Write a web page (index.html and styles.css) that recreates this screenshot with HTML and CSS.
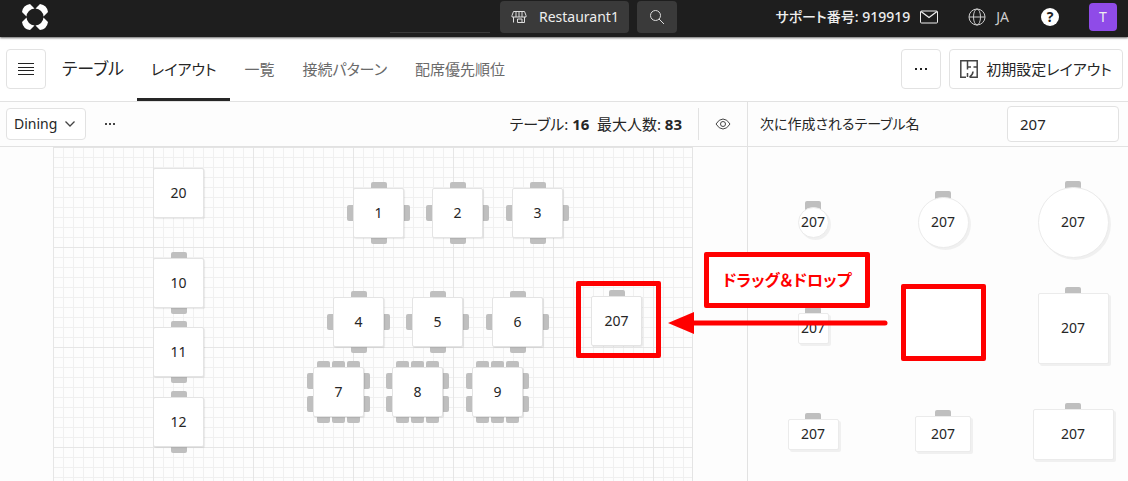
FILE: index.html
```html
<!DOCTYPE html>
<html lang="ja">
<head>
  <meta charset="UTF-8">
  <meta name="viewport" content="width=device-width, initial-scale=1.0">
  <title>テーブル</title>
  <link rel="stylesheet" href="styles.css">
</head>
<body>
  <!-- トップバー -->
  <header class="topbar">
    <svg class="logo" viewBox="0 0 26 26" width="26" height="26">
      <g fill="#fff">
        <path d="M8 0L12.500 4.500A8.500 8.500 0 0 0 4.500 12.500L0 8Q1 1 8 0Z"/>
        <path d="M8 0L12.500 4.500A8.500 8.500 0 0 0 4.500 12.500L0 8Q1 1 8 0Z" transform="rotate(90 13 13)"/>
        <path d="M8 0L12.500 4.500A8.500 8.500 0 0 0 4.500 12.500L0 8Q1 1 8 0Z" transform="rotate(180 13 13)"/>
        <path d="M8 0L12.500 4.500A8.500 8.500 0 0 0 4.500 12.500L0 8Q1 1 8 0Z" transform="rotate(270 13 13)"/>
      </g>
    </svg>
    <div class="scope">
      <div class="scope-line"></div>
      <button class="scope-button">
        <svg viewBox="0 0 16 16" width="16" height="16" fill="none" stroke="#ddd">
          <path d="M2.500 2.500h11l1.500 4v1.500h-14V6.500zM5 3v5M8 3v5M11 3v5M2.500 8v5.500M13.500 8v5.500h-7v-3.500h4.500v3.500"/>
        </svg>
        <span>Restaurant1</span>
      </button>
      <button class="scope-search" aria-label="検索">
        <svg viewBox="0 0 16 16" width="16" height="16" fill="none" stroke="#ddd">
          <circle cx="6.500" cy="6.500" r="5"/><path d="M10 10l5 5"/>
        </svg>
      </button>
    </div>
    <div class="topbar-right">
      <span class="support">サポート番号: 919919</span>
      <svg class="mail" viewBox="0 0 18 14" width="18" height="14" fill="none" stroke="#eee">
        <rect x="0.500" y="1" width="17" height="12" rx="1"/><path d="M1 1.500l8 6 8-6" stroke-width="1.300"/>
      </svg>
      <button class="lang">
        <svg viewBox="0 0 18 18" width="18" height="18" fill="none" stroke="#ccc">
          <circle cx="9" cy="9" r="8"/><ellipse cx="9" cy="9" rx="3.500" ry="8"/><path d="M1 9h16"/>
        </svg>
        <span>JA</span>
      </button>
      <button class="help">?</button>
      <button class="avatar">T</button>
    </div>
  </header>

  <!-- ページ見出しとタブ -->
  <div class="page-header">
    <button class="icon-button" aria-label="メニュー">
      <svg viewBox="0 0 16 12" width="16" height="12" fill="none" stroke="#222"><path d="M0 .5h16M0 4.500h16M0 7.500h16M0 11.500h16"/></svg>
    </button>
    <h1>テーブル</h1>
    <nav class="tabs">
      <a class="tab active" href="#">レイアウト</a>
      <a class="tab" href="#">一覧</a>
      <a class="tab" href="#">接続パターン</a>
      <a class="tab" href="#">配席優先順位</a>
    </nav>
    <div class="actions">
      <button class="icon-button" aria-label="その他"><svg viewBox="0 0 14 4" width="14" height="4" fill="#222"><path d="M1 1h2v2H1zM6 1h2v2H6zM11 1h2v2h-2z"/></svg></button>
      <button class="default-layout">
        <svg viewBox="0 0 18 18" width="18" height="18" fill="none" stroke="#444" stroke-width="1.500">
          <path d="M9.500 17.200H17.200V.8H.8V17.200H6M7.500 1v8.500M7.500 13v4M7.500 7h3.500M13.500 7H17M13 11.500q0 3-3.500 5.500"/>
        </svg>
        <span>初期設定レイアウト</span>
      </button>
    </div>
  </div>

  <main class="workspace">
    <section class="editor">
      <div class="toolbar">
        <div class="area-select">
          <select aria-label="エリア"><option>Dining</option></select>
          <svg viewBox="0 0 10 6" width="10" height="6" fill="none" stroke="#444" stroke-width="1.300"><path d="M.5 .5l4.500 4.500 4.500-4.500"/></svg>
        </div>
        <button class="more" aria-label="エリアの操作"><svg viewBox="0 0 12 4" width="12" height="4" fill="#444"><path d="M1 1h2v2H1zM5 1h2v2H5zM9 1h2v2H9z"/></svg></button>
        <p class="totals">テーブル: <b>16</b>&ensp;最大人数: <b>83</b></p>
        <button class="preview" aria-label="表示">
          <svg viewBox="0 0 16 12" width="16" height="12" fill="none" stroke="#444">
            <path d="M1 6q3-5 7-5t7 5q-3 5-7 5T1 6z"/><circle cx="8" cy="6" r="2.500"/>
          </svg>
        </button>
      </div>

      <!-- フロア図 -->
      <div class="floor">
        <div class="canvas">
          <div class="table t20"><span class="face">20</span></div>
          <div class="table t10">
            <div class="chairs top"><i></i></div><div class="chairs bottom"><i></i></div><span class="face">10</span>
          </div>
          <div class="table t11">
            <div class="chairs top"><i></i></div><div class="chairs bottom"><i></i></div><span class="face">11</span>
          </div>
          <div class="table t12">
            <div class="chairs top"><i></i></div><div class="chairs bottom"><i></i></div><span class="face">12</span>
          </div>
          <div class="table t1">
            <div class="chairs top"><i></i></div><div class="chairs bottom"><i></i></div>
            <div class="chairs left"><i></i></div><div class="chairs right"><i></i></div><span class="face">1</span>
          </div>
          <div class="table t2">
            <div class="chairs top"><i></i></div><div class="chairs bottom"><i></i></div>
            <div class="chairs left"><i></i></div><div class="chairs right"><i></i></div><span class="face">2</span>
          </div>
          <div class="table t3">
            <div class="chairs top"><i></i></div><div class="chairs bottom"><i></i></div>
            <div class="chairs left"><i></i></div><div class="chairs right"><i></i></div><span class="face">3</span>
          </div>
          <div class="table t4">
            <div class="chairs top"><i></i></div><div class="chairs bottom"><i></i></div>
            <div class="chairs left"><i></i></div><div class="chairs right"><i></i></div><span class="face">4</span>
          </div>
          <div class="table t5">
            <div class="chairs top"><i></i></div><div class="chairs bottom"><i></i></div>
            <div class="chairs left"><i></i></div><div class="chairs right"><i></i></div><span class="face">5</span>
          </div>
          <div class="table t6">
            <div class="chairs top"><i></i></div><div class="chairs bottom"><i></i></div>
            <div class="chairs left"><i></i></div><div class="chairs right"><i></i></div><span class="face">6</span>
          </div>
          <div class="table party t7">
            <div class="chairs top"><i></i><i></i><i></i></div><div class="chairs bottom"><i></i><i></i><i></i></div>
            <div class="chairs left"><i></i><i></i></div><div class="chairs right"><i></i><i></i></div><span class="face">7</span>
          </div>
          <div class="table party t8">
            <div class="chairs top"><i></i><i></i><i></i></div><div class="chairs bottom"><i></i><i></i><i></i></div>
            <div class="chairs left"><i></i><i></i></div><div class="chairs right"><i></i><i></i></div><span class="face">8</span>
          </div>
          <div class="table party t9">
            <div class="chairs top"><i></i><i></i><i></i></div><div class="chairs bottom"><i></i><i></i><i></i></div>
            <div class="chairs left"><i></i><i></i></div><div class="chairs right"><i></i><i></i></div><span class="face">9</span>
          </div>
          <div class="table t207">
            <div class="chairs top"><i></i></div><span class="face">207</span>
          </div>
        </div>
      </div>
    </section>

    <!-- テーブルのパレット -->
    <aside class="side">
      <div class="next-name">
        <label for="next-name">次に作成されるテーブル名</label>
        <input type="text" id="next-name" value="207">
      </div>
      <div class="palette">
        <div class="slot"><div class="shape round small"><div class="chairs top"><i></i></div><span class="face">207</span></div></div>
        <div class="slot"><div class="shape round medium"><div class="chairs top"><i></i></div><span class="face">207</span></div></div>
        <div class="slot"><div class="shape round large"><div class="chairs top"><i></i></div><span class="face">207</span></div></div>
        <div class="slot"><div class="shape small"><div class="chairs top"><i></i></div><span class="face">207</span></div></div>
        <div class="slot"></div>
        <div class="slot"><div class="shape large"><div class="chairs top"><i></i></div><span class="face">207</span></div></div>
        <div class="slot"><div class="shape wide-s"><div class="chairs top"><i></i></div><span class="face">207</span></div></div>
        <div class="slot"><div class="shape wide-m"><div class="chairs top"><i></i></div><span class="face">207</span></div></div>
        <div class="slot"><div class="shape wide-l"><div class="chairs top"><i></i></div><span class="face">207</span></div></div>
      </div>
    </aside>

    <!-- 操作の説明 -->
    <div class="mark mark-to"></div>
    <div class="mark mark-from"></div>
    <svg class="arrow" viewBox="0 0 220 22" width="220" height="22">
      <path d="M20 11H217" stroke="#f00" stroke-width="5" stroke-linecap="round"/>
      <path d="M0 11L26 0V22z" fill="#f00"/>
    </svg>
    <div class="mark mark-label">ドラッグ＆ドロップ</div>
  </main>
</body>
</html>
```
FILE: styles.css
```css
* {
  box-sizing: border-box;
}

html, body {
  height: 100%;
  margin: 0;
}

body {
  display: flex;
  flex-direction: column;
  overflow: hidden;
  background: #fff;
  color: #262626;
  font-family: "Noto Sans", "Noto Sans CJK JP", sans-serif;
  font-size: 15px;
  line-height: 20px;
  font-feature-settings: "palt"; /* かなを詰めて組む */
}

button, select, input {
  font: inherit;
  color: inherit;
  font-feature-settings: inherit;
}

button {
  padding: 0;
  border: none;
  background: none;
  cursor: pointer;
}

svg {
  display: block;
  flex: none;
}

/* トップバー */
.topbar {
  display: flex;
  align-items: center;
  flex: none;
  height: 37px;
  padding: 0 11px 3px 22px;
  background: #1e1e1e;
  color: #eee;
  box-shadow: 0 1px 2px rgba(0, 0, 0, 0.6);
  position: relative;
  font-size: 14px;
}

.scope {
  display: flex;
  gap: 8px;
  margin: 0 98px 0 auto;
}

.scope-line {
  width: 100px;
  border-bottom: 1px solid #3a3a3a;
  margin-right: 2px;
}

.scope-button,
.scope-search {
  display: flex;
  align-items: center;
  justify-content: center;
  gap: 12px;
  height: 32px;
  padding: 0 12px;
  border-radius: 4px;
  background: #3a3a3a;
}

.scope-button {
  width: 129px;
}

.scope-search {
  width: 40px;
}

.topbar-right {
  display: flex;
  align-items: center;
}

.support {
  font-weight: 500;
}

.mail {
  margin: 0 30px 0 10px;
}

.lang {
  display: flex;
  align-items: center;
  gap: 10px;
  color: #ccc;
  font-size: 14px;
}

.help {
  width: 18px;
  height: 18px;
  margin: 0 30px 0 32px;
  border-radius: 50%;
  background: #fff;
  color: #1e1e1e;
  font-weight: bold;
  line-height: 18px;
}

.avatar {
  width: 28px;
  height: 28px;
  border-radius: 4px;
  background: #8f4be8;
}

/* ページ見出し */
.page-header {
  display: flex;
  align-items: center;
  flex: none;
  height: 65px;
  padding: 0 5px 0 6px;
  border-bottom: 1px solid #e2e2e2;
}

.icon-button,
.default-layout {
  display: flex;
  align-items: center;
  justify-content: center;
  width: 40px;
  height: 40px;
  border: 1px solid #e2e2e2;
  border-radius: 4px;
  background: #fff;
}

h1 {
  width: 75px;
  margin: 0 0 0 16px;
  font-size: 17px;
  font-weight: normal;
  line-height: 24px;
  white-space: nowrap;
}

.tabs {
  display: flex;
  align-self: stretch;
}

.tab {
  display: flex;
  align-items: center;
  padding: 0 14px;
  border-top: 3px solid transparent;
  border-bottom: 3px solid transparent;
  color: #6a6a6a;
  text-decoration: none;
  white-space: nowrap;
}

.tab.active {
  border-bottom-color: #262626;
  color: #262626;
}

.actions {
  display: flex;
  gap: 8px;
  margin-left: auto;
}

.default-layout {
  width: 174px;
  gap: 8px;
  white-space: nowrap;
}

/* 作業エリア */
.workspace {
  position: relative;
  display: flex;
  flex: 1;
  min-height: 0;
}

.editor {
  display: flex;
  flex-direction: column;
  flex: 1;
  min-width: 0;
  background: #fdfdfd;
}

.toolbar,
.next-name {
  display: flex;
  align-items: center;
  flex: none;
  height: 45px;
  border-bottom: 1px solid #e2e2e2;
}

.toolbar {
  padding: 0 16px 0 6px;
}

.area-select {
  display: grid;
  align-items: center;
  width: 80px;
}

.area-select select,
.area-select svg {
  grid-area: 1 / 1;
}

.area-select select {
  width: 100%;
  height: 32px;
  padding: 0 7px;
  border: 1px solid #e2e2e2;
  border-radius: 4px;
  background: #fff;
  font-size: 14px;
  appearance: none;
}

.area-select svg {
  justify-self: end;
  margin-right: 11px;
  pointer-events: none;
}

.more {
  padding: 8px 18px;
}

.totals {
  margin: 0 16px 0 auto;
}

.preview {
  display: flex;
  align-items: center;
  height: 32px;
  padding-left: 16px;
  border-left: 1px solid #e2e2e2;
}

.floor {
  display: flex;
  flex: 1;
  padding: 0 54px 0 53px;
}

/* 方眼は10px、太線は100pxごと */
.canvas {
  position: relative;
  flex: 1;
  border-right: 1px solid #e4e4e4;
  border-top: 1px solid #e4e4e4;
  background-color: #fdfdfd;
  background-image:
    linear-gradient(90deg, #e6e6e6 1px, transparent 1px),
    linear-gradient(#e6e6e6 1px, transparent 1px),
    linear-gradient(90deg, #f0f0f0 1px, transparent 1px),
    linear-gradient(#f0f0f0 1px, transparent 1px);
  background-size: 100px 100px, 100px 100px, 10px 10px, 10px 10px;
  background-origin: border-box;
}

.table,
.shape {
  display: flex;
  width: 51px;
  height: 51px;
}

.table {
  position: absolute;
  height: 50px;
}

.shape {
  position: relative;
}

.face {
  position: relative;
  display: flex;
  align-items: center;
  justify-content: center;
  flex: 1;
  border: 1px solid #e4e4e4;
  border-radius: 2px;
  background: #fff;
  box-shadow: 1px 1px 1px rgba(0, 0, 0, 0.08);
  font-size: 14px;
}

.shape .face {
  border-color: #ebebeb;
  box-shadow: 2px 2px 0 rgba(0, 0, 0, 0.05);
}

.chairs {
  position: absolute;
  display: flex;
  justify-content: center;
}

.chairs i {
  width: 16px;
  height: 6px;
  background: #bfbfbf;
}

.top,
.bottom {
  left: 0;
  right: 0;
  gap: 1px;
}

.top {
  bottom: 100%;
}

.bottom {
  top: 100%;
}

.left,
.right {
  top: 0;
  bottom: 0;
  flex-direction: column;
  gap: 7px;
}

.left {
  right: 100%;
}

.right {
  left: 100%;
}

.top i {
  border-radius: 2px 2px 0 0;
}

.bottom i {
  border-radius: 0 0 2px 2px;
}

.left i,
.right i {
  width: 6px;
  height: 16px;
}

.left i {
  border-radius: 2px 0 0 2px;
}

.right i {
  border-radius: 0 2px 2px 0;
}

.party .top,
.party .bottom {
  gap: 2px;
}

.party .top i,
.party .bottom i {
  width: 13px;
}

.t20 { left: 100px; top: 20px; }
.t10 { left: 100px; top: 110px; }
.t11 { left: 100px; top: 179px; }
.t12 { left: 100px; top: 249px; }
.t1 { left: 300px; top: 40px; }
.t2 { left: 379px; top: 40px; }
.t3 { left: 459px; top: 40px; }
.t4 { left: 280px; top: 149px; }
.t5 { left: 359px; top: 149px; }
.t6 { left: 439px; top: 149px; }
.t7 { left: 260px; top: 219px; }
.t8 { left: 339px; top: 219px; }
.t9 { left: 419px; top: 219px; }
.t207 { left: 538px; top: 148px; }

/* 右パネル */
.side {
  flex: none;
  width: 381px;
  overflow: hidden;
  border-left: 1px solid #e2e2e2;
  background: #fdfdfd;
}

.next-name {
  justify-content: space-between;
  padding: 0 9px 0 12px;
}

.next-name label {
  font-size: 14px;
}

.next-name input {
  width: 112px;
  height: 36px;
  padding: 0 12px;
  border: 1px solid #e2e2e2;
  border-radius: 4px;
  background: #fff;
}

.palette {
  display: grid;
  grid-template-columns: repeat(3, 130px);
  grid-auto-rows: 106px;
  padding-top: 22px;
}

.slot {
  display: flex;
  align-items: center;
  justify-content: center;
}

.round .face {
  border-radius: 50%;
}

.round .chairs i {
  height: 10px;
  margin-bottom: -4px;
}

.small { width: 31px; height: 31px; }
.large { width: 71px; height: 71px; }
.wide-s { width: 51px; height: 31px; }
.wide-m { width: 56px; height: 36px; }
.wide-l { width: 81px; height: 51px; }

/* 赤枠と矢印 */
.mark {
  position: absolute;
  width: 85px;
  height: 77px;
  border: 5px solid #f00;
  border-radius: 2px;
}

.mark-to {
  left: 576px;
  top: 179px;
}

.mark-from {
  right: 142px;
  top: 182px;
  background: #fff;
}

.mark-label {
  right: 258px;
  top: 150px;
  display: flex;
  align-items: center;
  justify-content: center;
  width: 166px;
  height: 56px;
  background: #fff;
  color: #f00;
  font-size: 16px;
  font-weight: bold;
  white-space: nowrap;
}

.arrow {
  position: absolute;
  right: 240px;
  top: 210px;
}
```
